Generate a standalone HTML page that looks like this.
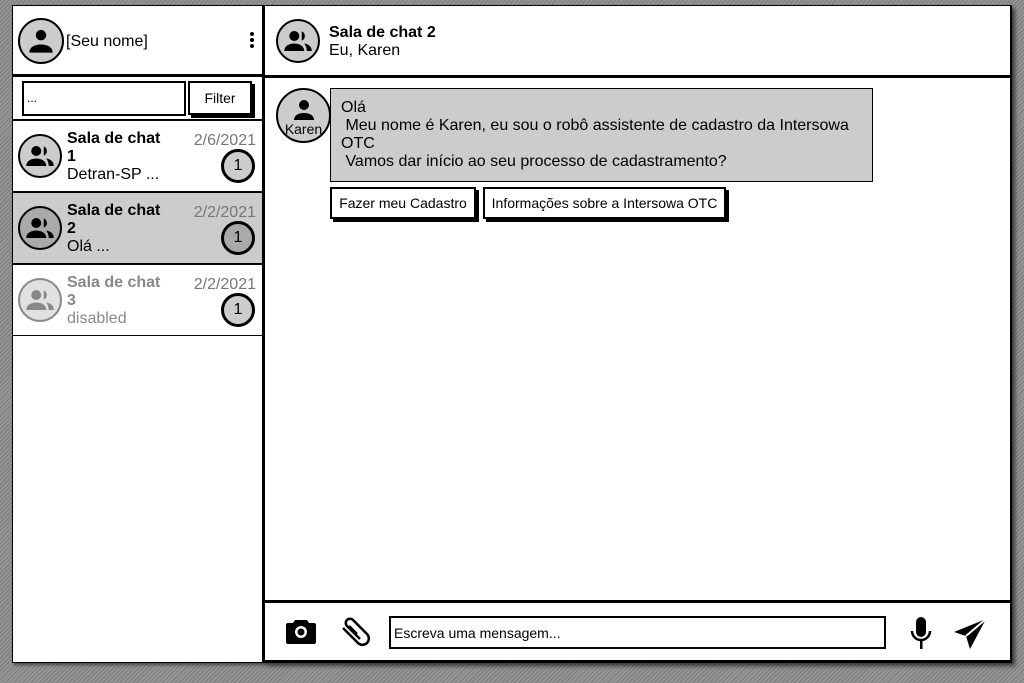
<!DOCTYPE html>
<html><head><meta charset="utf-8"><style>
*{box-sizing:border-box;margin:0;padding:0}
body{width:1024px;height:683px;overflow:hidden;font-family:"Liberation Sans","DejaVu Sans",sans-serif;background:#8a8a8a repeating-linear-gradient(135deg,#7c7c7c 0 1px,#959595 1px 3px);position:relative}
.abs{position:absolute}
.left{left:12px;top:5px;width:251px;height:658px;background:#fff;border:1px solid #000;box-shadow:2px 2px 3px rgba(0,0,0,.5)}
.right{left:262px;top:5px;width:750px;height:658px;background:#fff;border:3px solid #000;border-top-width:1px;border-right-width:2px;box-shadow:3px 3px 4px rgba(0,0,0,.6)}
.av{position:absolute;border:2px solid #000;border-radius:50%;background:#ccc;display:flex;align-items:center;justify-content:center}
.t{position:absolute;font-size:16px;line-height:18px;white-space:nowrap}
.d{position:absolute;font-size:16px;line-height:18px;right:6px;color:#777}
.b{font-weight:bold}
.badge{position:absolute;width:34px;height:34px;border:3px solid #000;border-radius:50%;background:#ccc;font-size:16px;text-align:center;line-height:28px}
.btn{position:absolute;border:2px solid #000;background:#fff;box-shadow:3px 3px 0 #000;font-size:14px;text-align:center}
</style></head><body>
<div class="abs left">
  <div class="av" style="left:5px;top:12px;width:46px;height:46px"><svg width="28" height="28" viewBox="0 0 24 24"><circle cx="12" cy="7" r="4.5"/><path d="M2 22c0-5 5-7 10-7s10 2 10 7z"/></svg></div>
  <div class="t" style="left:53px;top:27px;color:#000">[Seu nome]</div>
  <div class="abs" style="left:237px;top:26px;width:4px"><div style="width:4px;height:4px;background:#000;border-radius:50%;margin-bottom:2px"></div><div style="width:4px;height:4px;background:#000;border-radius:50%;margin-bottom:2px"></div><div style="width:4px;height:4px;background:#000;border-radius:50%"></div></div>
  <div class="abs" style="left:0;top:68px;width:249px;height:3px;background:#000"></div>
  <div class="abs" style="left:9px;top:75px;width:164px;height:35px;border:2px solid #000;font-size:12px;padding:8px 3px">...</div>
  <div class="btn" style="left:175px;top:75px;width:64px;height:34px;line-height:30px">Filter</div>
  <div class="abs" style="left:0;top:113px;width:249px;height:2px;background:#000"></div>
  <div class="av" style="left:5px;top:128px;width:44px;height:44px"><svg width="30" height="30" viewBox="0 0 24 24"><circle cx="9" cy="8" r="4"/><path d="M1 20c0-4 4-6 8-6s8 2 8 6z"/><path d="M15 4.3a4 4 0 0 1 0 7.4z"/><path d="M17 14c3 .5 6 2 6 6h-4c0-2.5-1-4.5-2-6z"/></svg></div>
  <div class="t b" style="left:54px;top:124px">Sala de chat<br>1</div>
  <div class="t" style="left:54px;top:160px">Detran-SP ...</div>
  <div class="d" style="top:126px">2/6/2021</div>
  <div class="badge" style="left:208px;top:143px">1</div>
  <div class="abs" style="left:0;top:185px;width:249px;height:2px;background:#000"></div>
  <div class="abs" style="left:0;top:187px;width:249px;height:70px;background:#ccc"></div>
  <div class="av" style="left:5px;top:200px;width:44px;height:44px;background:#aaa"><svg width="30" height="30" viewBox="0 0 24 24"><circle cx="9" cy="8" r="4"/><path d="M1 20c0-4 4-6 8-6s8 2 8 6z"/><path d="M15 4.3a4 4 0 0 1 0 7.4z"/><path d="M17 14c3 .5 6 2 6 6h-4c0-2.5-1-4.5-2-6z"/></svg></div>
  <div class="t b" style="left:54px;top:196px">Sala de chat<br>2</div>
  <div class="t" style="left:54px;top:232px">Olá ...</div>
  <div class="d" style="top:198px">2/2/2021</div>
  <div class="badge" style="left:208px;top:215px;background:#aaa">1</div>
  <div class="abs" style="left:0;top:257px;width:249px;height:2px;background:#000"></div>
  <div class="av" style="left:5px;top:272px;width:44px;height:44px;border-color:#888;background:#e0e0e0"><svg width="30" height="30" viewBox="0 0 24 24" fill="#888"><circle cx="9" cy="8" r="4"/><path d="M1 20c0-4 4-6 8-6s8 2 8 6z"/><path d="M15 4.3a4 4 0 0 1 0 7.4z"/><path d="M17 14c3 .5 6 2 6 6h-4c0-2.5-1-4.5-2-6z"/></svg></div>
  <div class="t b" style="left:54px;top:268px;color:#888">Sala de chat<br>3</div>
  <div class="t" style="left:54px;top:304px;color:#888">disabled</div>
  <div class="d" style="top:270px">2/2/2021</div>
  <div class="badge" style="left:208px;top:287px">1</div>
  <div class="abs" style="left:0;top:329px;width:249px;height:1px;background:#000"></div>
</div>
<div class="abs right">
  <div class="av" style="left:11px;top:13px;width:44px;height:44px"><svg width="30" height="30" viewBox="0 0 24 24"><circle cx="9" cy="8" r="4"/><path d="M1 20c0-4 4-6 8-6s8 2 8 6z"/><path d="M15 4.3a4 4 0 0 1 0 7.4z"/><path d="M17 14c3 .5 6 2 6 6h-4c0-2.5-1-4.5-2-6z"/></svg></div>
  <div class="t b" style="left:64px;top:18px">Sala de chat 2</div>
  <div class="t" style="left:64px;top:36px">Eu, Karen</div>
  <div class="abs" style="left:0;top:69px;width:745px;height:3px;background:#000"></div>
  <div class="av" style="left:11px;top:82px;width:55px;height:55px;flex-direction:column;background:#ccc;border-width:2px"><svg width="24" height="24" viewBox="0 0 24 24" style="margin-top:2px"><circle cx="12" cy="7" r="5"/><path d="M2 22c0-5 5-7 10-7s10 2 10 7z"/></svg><span style="font-size:14px;line-height:14px">Karen</span></div>
  <div class="abs" style="left:65px;top:82px;width:543px;height:94px;background:#ccc;border:1px solid #000;padding:10px 10px;font-size:16px;line-height:18px;white-space:pre">Olá
 Meu nome é Karen, eu sou o robô assistente de cadastro da Intersowa
OTC
 Vamos dar início ao seu processo de cadastramento?</div>
  <div class="btn" style="left:65px;top:181px;width:146px;height:32px;line-height:28px">Fazer meu Cadastro</div>
  <div class="btn" style="left:218px;top:181px;width:243px;height:32px;line-height:28px">Informações sobre a Intersowa OTC</div>
  <div class="abs" style="left:0;top:594px;width:745px;height:3px;background:#000"></div>
  <svg class="abs" style="left:20px;top:611px" width="32" height="28" viewBox="0 0 32 28"><path d="M10 3h12l2 3h5a2 2 0 0 1 2 2v17a2 2 0 0 1-2 2H3a2 2 0 0 1-2-2V8a2 2 0 0 1 2-2h5z"/><circle cx="16" cy="15" r="6" fill="#fff"/><circle cx="16" cy="15" r="3.5"/></svg>
  <svg class="abs" style="left:73px;top:611px" width="32" height="30" viewBox="0 0 32 30" fill="none" stroke="#000" stroke-width="2.5"><path d="M22 22L9 9a4 4 0 0 1 6-6l14 14a6 6 0 0 1-9 9L5 11"/><path d="M19 17L11 9"/></svg>
  <div class="abs" style="left:124px;top:610px;width:497px;height:33px;border:2px solid #000;font-size:14px;padding:7px 3px">Escreva uma mensagem...</div>
  <svg class="abs" style="left:645px;top:610px" width="22" height="34" viewBox="0 0 22 34"><rect x="6" y="1" width="10" height="20" rx="5"/><path d="M2 15a9 9 0 0 0 18 0" fill="none" stroke="#000" stroke-width="2.5"/><rect x="10" y="24" width="2.5" height="9"/></svg>
  <svg class="abs" style="left:688px;top:612px" width="34" height="32" viewBox="0 0 34 32"><path d="M33 1L1 14l12 4 4 13z"/><path d="M13 18L33 1" stroke="#fff" stroke-width="2"/></svg>
</div>
</body></html>
